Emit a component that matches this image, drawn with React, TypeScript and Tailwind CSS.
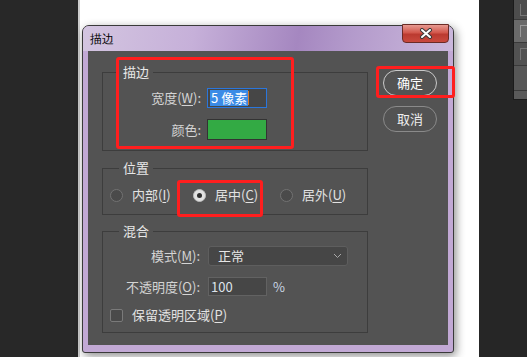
import type { ReactNode } from 'react';

function Mn({ c }: { c: string }) {
  return (
    <>
      (<span className="underline underline-offset-2">{c}</span>)
    </>
  );
}

function Group({ title, className, children }: { title: string; className?: string; children: ReactNode }) {
  return (
    <fieldset className={`border border-[#3d3d3d] ${className ?? ''}`}>
      <legend className="ml-[16px] px-[4px] text-[13px] leading-[16px] text-[#e8e8e8]">{title}</legend>
      {children}
    </fieldset>
  );
}

function Radio({ label, checked, className }: { label: ReactNode; checked?: boolean; className?: string }) {
  return (
    <div className={`flex items-center ${className ?? ''}`}>
      {checked ? (
        <span className="flex h-[13px] w-[13px] items-center justify-center rounded-full border border-[#bdbdbd] bg-[#e2e2e2]">
          <span className="h-[5px] w-[5px] rounded-full bg-[#2e2e2e]" />
        </span>
      ) : (
        <span className="h-[13px] w-[13px] rounded-full border border-[#727272] bg-[#4a4a4a]" />
      )}
      <span className="ml-[9px] text-[13px] leading-[16px] text-[#e2e2e2]">{label}</span>
    </div>
  );
}

function CloseButton() {
  return (
    <div className="-mt-[2px] mr-[4px] flex h-[19px] w-[47px] items-center justify-center rounded-b-[4px] border border-[#6b2b26] bg-[linear-gradient(to_bottom,#e79a91_0%,#d2574c_45%,#bb3a30_55%,#c9493e_100%)]">
      <svg width="14" height="11" viewBox="0 0 14 11">
        <path d="M3 2 L11 9 M11 2 L3 9" stroke="#3a3a3a" strokeWidth="4" strokeLinecap="round" />
        <path d="M3 2 L11 9 M11 2 L3 9" stroke="#ffffff" strokeWidth="2" strokeLinecap="round" />
      </svg>
    </div>
  );
}

function StrokeDialog() {
  return (
    <div className="relative flex h-[328px] w-[372px] flex-col rounded-t-[7px] rounded-b-[3px] border border-[#3a3a3a] bg-[#c2a9d5] shadow-[2px_3px_10px_rgba(0,0,0,0.45)]">
      {/* title bar */}
      <div className="flex h-[25px] items-start justify-between rounded-t-[6px] bg-[linear-gradient(100deg,#d3c5e0_0%,#c6b0d9_30%,#a587c0_58%,#b39acb_72%,#cbb8dc_100%)]">
        <span className="pl-[7px] pt-[5px] text-[12px] leading-[16px] text-black">描边</span>
        <CloseButton />
      </div>

      {/* body */}
      <div className="mx-[5px] mb-[7px] flex flex-1 bg-[#535353] pl-[14px] pt-[13px] font-['Noto_Sans_CJK_SC',sans-serif]">
        <div className="flex w-[266px] flex-col">
          <Group title="描边">
            <div className="flex flex-col gap-[11px] pb-[10px] pt-[8px]">
              <div className="flex h-[20px] items-center">
                <span className="w-[98px] text-right text-[13px] text-[#d4d4d4]">
                  宽度<Mn c="W" />:
                </span>
                <div className="ml-[6px] flex h-[20px] w-[60px] items-center border border-[#2a76dc] bg-[#464646] pl-[2px]">
                  <span className="bg-[#3b8be6] px-[1px] text-[13px] leading-[16px] text-white">5 像素</span>
                  <span className="h-[14px] w-[1px] bg-[#d87a2a]" />
                </div>
              </div>
              <div className="flex h-[21px] items-center">
                <span className="w-[98px] text-right text-[13px] text-[#d4d4d4]">颜色:</span>
                <div className="ml-[6px] h-[21px] w-[60px] border border-[#333333] bg-[#33aa44]" />
              </div>
            </div>
          </Group>

          <Group title="位置" className="mt-[9px]">
            <div className="flex h-[38px] items-start pl-[7px] pt-[11px]">
              <Radio className="w-[83px]" label={<>内部<Mn c="I" /></>} />
              <Radio className="w-[87px]" checked label={<>居中<Mn c="C" /></>} />
              <Radio label={<>居外<Mn c="U" /></>} />
            </div>
          </Group>

          <Group title="混合" className="mt-[8px]">
            <div className="flex flex-col gap-[11px] pb-[9px] pt-[7px]">
              <div className="flex h-[20px] items-center">
                <span className="w-[97px] text-right text-[13px] text-[#d4d4d4]">
                  模式<Mn c="M" />:
                </span>
                <div className="ml-[8px] flex h-[20px] w-[140px] items-center justify-between rounded-[3px] border border-[#5e5e5e] bg-[#464646] pl-[9px] pr-[5px]">
                  <span className="text-[13px] leading-[16px] text-[#e6e6e6]">正常</span>
                  <svg width="9" height="6" viewBox="0 0 9 6">
                    <path d="M1 1 L4.5 4.5 L8 1" fill="none" stroke="#a8a8a8" strokeWidth="1" />
                  </svg>
                </div>
              </div>
              <div className="flex h-[19px] items-center">
                <span className="w-[97px] text-right text-[13px] text-[#d4d4d4]">
                  不透明度<Mn c="O" />:
                </span>
                <div className="ml-[8px] flex h-[19px] w-[59px] items-center border border-[#626262] bg-[#464646] pl-[2px]">
                  <span className="text-[13px] leading-[16px] text-[#dde3ea]">100</span>
                </div>
                <span className="ml-[6px] text-[13px] text-[#c9d6e3]">%</span>
              </div>
              <div className="flex h-[16px] items-center pl-[7px]">
                <span className="h-[13px] w-[13px] rounded-[2px] border border-[#7a7a7a] bg-[#4a4a4a]" />
                <span className="ml-[9px] text-[13px] leading-[16px] text-[#e2e2e2]">
                  保留透明区域<Mn c="P" />
                </span>
              </div>
            </div>
          </Group>
        </div>

        <div className="ml-[15px] flex w-[54px] flex-col gap-[10px] pt-[6px]">
          <button className="h-[26px] rounded-full border border-[#c9c9c9] text-[13px] text-white">确定</button>
          <button className="h-[26px] rounded-full border border-[#8a8a8a] text-[13px] text-[#eeeeee]">取消</button>
        </div>
      </div>

      {/* red annotation boxes */}
      <div className="pointer-events-none absolute left-[33px] top-[31px] h-[92px] w-[178px] rounded-[3px] border-[3px] border-[#ff1e1e]" />
      <div className="pointer-events-none absolute left-[94px] top-[154px] h-[37px] w-[86px] rounded-[3px] border-[3px] border-[#ff1e1e]" />
      <div className="pointer-events-none absolute left-[293px] top-[40px] h-[32px] w-[79px] rounded-[3px] border-[3px] border-[#ff1e1e]" />
    </div>
  );
}

function SidePanel() {
  return (
    <div className="flex h-[100px] w-[14px] flex-col border-l border-b border-[#1b1b1b] bg-[#4d4d4d]">
      <div className="flex h-[20px] items-center border-b border-[#3a3a3a] pl-[6px]">
        <span className="h-[12px] w-[8px] border-l border-b border-[#777777]" />
      </div>
      <div className="flex h-[23px] items-center border-b border-[#3a3a3a] bg-[#6a6a6a] pl-[6px]">
        <span className="h-[12px] w-[8px] border-l border-t border-[#9a9a9a]" />
      </div>
      <div className="flex h-[23px] items-center border-b border-[#3a3a3a] bg-[#525252] pl-[6px]">
        <span className="h-[12px] w-[8px] border-l border-t border-[#777777]" />
      </div>
      <div className="h-[25px] border-b border-[#3a3a3a] bg-[#575757]" />
      <div className="flex-1 bg-[#5a5a5a]" />
    </div>
  );
}

export default function App() {
  return (
    <div className="flex h-[357px] w-[527px] overflow-hidden">
      <div className="w-[78px] bg-[#282828]" />
      <div className="w-[401px] border-l-2 border-[#cdcdcd] bg-white pl-[2px] pt-[25px]">
        <StrokeDialog />
      </div>
      <div className="flex flex-1 justify-end bg-[#262626]">
        <SidePanel />
      </div>
    </div>
  );
}
